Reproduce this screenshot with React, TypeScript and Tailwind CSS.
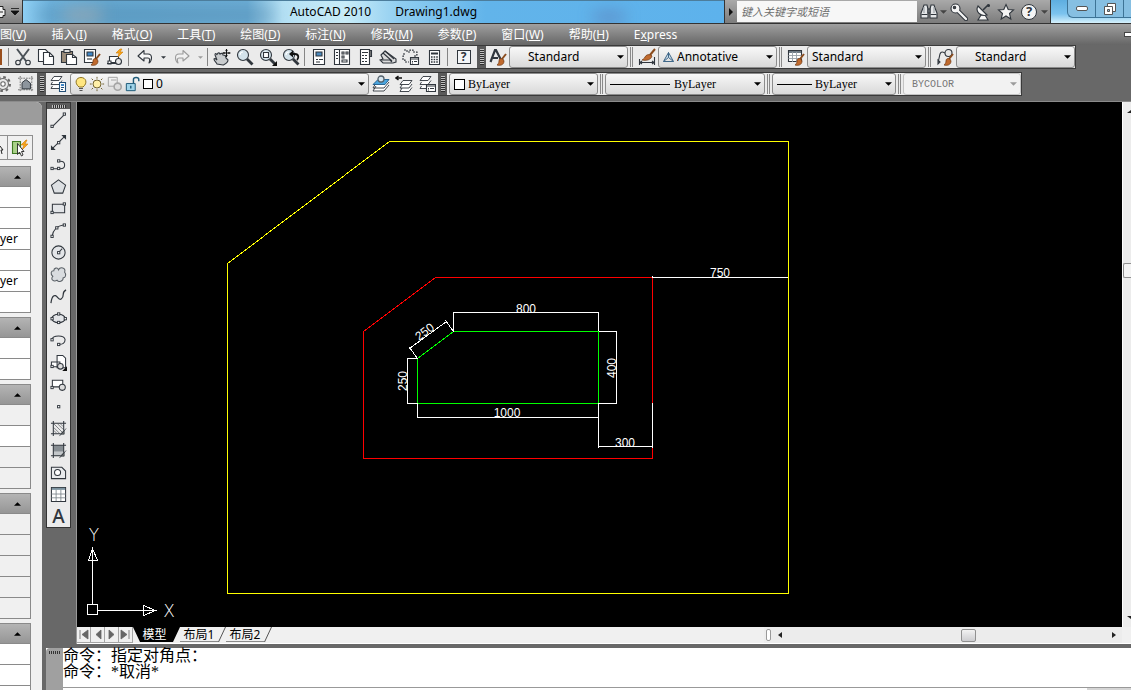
import type { ReactNode } from "react";

const UI = "font-['Noto_Sans','Noto_Sans_CJK_SC',sans-serif]";

type IconProps = { children: ReactNode; className?: string };

function Icon({ children, className = "size-[18px]" }: IconProps) {
  return (
    <svg
      viewBox="0 0 18 18"
      fill="none"
      stroke="#30363d"
      strokeWidth="1.1"
      className={`${className} shrink-0`}
      aria-hidden="true"
    >
      {children}
    </svg>
  );
}

const brush = (
  <>
    <path d="M17 6 13 11" stroke="#8a4b1d" strokeWidth="2" />
    <path d="M14 11c-3-1-4 0-4 2s-1 3-2 4c3 1 7 0 7-4z" fill="#c06a2e" stroke="#6b3510" strokeWidth="0.700" />
  </>
);

const lens = (
  <>
    <circle cx="7" cy="7" r="5.500" fill="#d3e2ea" />
    <path d="M4 7c0-2 1-3 3-3" stroke="#fff" />
    <path d="m11 11 5.500 5.500" strokeWidth="2.800" />
  </>
);

const sheets = (
  <g strokeWidth="0.900">
    <path d="M5 1.500h8l-3 4H2z" fill="#fff" />
    <path d="M3.500 7 2 9.500h8l3-4" fill="#fff" />
    <path d="M3.500 11 2 13.500h8l3-4" fill="#fff" />
  </g>
);

const icons = {
  cut: (
    <>
      <path d="m3 1 9 12M15 1 6 13" stroke="#4b5258" strokeWidth="2" />
      <circle cx="4" cy="14.500" r="2.300" />
      <circle cx="14" cy="14.500" r="2.300" />
    </>
  ),
  copy: (
    <>
      <path d="M1.500 1.500h7l3 3v9h-10z" fill="#fff" />
      <path d="M6.500 4.500h6l4 4v8h-10z" fill="#fff" />
      <path d="M12.500 4.500v4h4" />
    </>
  ),
  paste: (
    <>
      <path d="M1.500 3.500h11v11h-11z" fill="#9b8c7a" />
      <path d="M4 1.500h6v3H4z" fill="#ddd" />
      <path d="M6.500 6.500h6l4 3v7h-10z" fill="#fff" />
      <path d="M12.500 6.500v3h4" />
    </>
  ),
  match: (
    <>
      <path d="M1.500 1.500h11v13h-11z" fill="#fff" />
      <path d="M4 4h6v4H4z" fill="#3f86c6" />
      <path d="M4 11h5" />
      {brush}
    </>
  ),
  block: (
    <>
      <path d="M3.500 8.500h9v6h-9z" fill="#fff" />
      <path d="M1 15.500h10M2 13h3v3H2z" fill="#fff" />
      <circle cx="12.500" cy="13.500" r="3" fill="#e6e6e6" />
      <path d="m14 1-4 4h3l-1 4 5-5h-3l2-3z" fill="#f7a51c" stroke="#d17a00" strokeWidth="0.600" />
    </>
  ),
  undo: <path d="M8 2.500 2 8l6 5v-3h4c2 0 2 2 1 5 3-2 4-9-1-9H8z" fill="#f7f7f7" strokeLinejoin="round" />,
  redo: (
    <path
      d="m10 2.500 6 5.500-6 5v-3H6c-2 0-2 2-1 5C2 13 1 6 6 6h4z"
      fill="#f1f1f1"
      stroke="#9b9b9b"
      strokeLinejoin="round"
    />
  ),
  pan: (
    <>
      <path
        d="M4 16c-1-2-3-3-3-5 1-1 2 0 3 1L2 7c0-2 1-2 2 0 0-2 2-3 3-1 1-1 3-1 3 1 2 0 3 1 3 3l2 2c0 3-3 4-5 5z"
        fill="#c9ccce"
      />
      <path d="M13.500 1v8M9.500 5h8M12.500 2.500h2M12.500 7.500h2M11 4v2M16 4v2" stroke="#111" />
    </>
  ),
  zoom: lens,
  zoomWindow: (
    <>
      {lens}
      <path d="M4.500 4.500h5v5h-5z" fill="#fff" />
      <path d="M18 13v5h-5z" fill="#111" stroke="none" />
    </>
  ),
  zoomPrev: (
    <>
      {lens}
      <path d="M10 6h3c4 0 4 4 2 6" strokeWidth="1.800" stroke="#111" />
      <path d="M11 2.500v7L7 6z" fill="#111" stroke="none" />
    </>
  ),
  properties: (
    <>
      <path d="M3.500 1.500h11v15h-11z" fill="#fff" />
      <path d="M6 4h6v4H6z" fill="#4b89bd" />
      <path d="M6 11.500h2M9 11.500h4M6 14h4" />
    </>
  ),
  designCenter: (
    <>
      <path d="M1.500 1.500h15v15h-15zM6.500 1.500v15" fill="#fff" />
      <path d="M3 4.500h2M3 7.500h2M3 10.500h2M9 4h2v2H9zM13 4h2v2h-2zM9 8h2v2H9zM9 12h5v2H9z" />
    </>
  ),
  toolPalettes: (
    <>
      <path d="M4.500 1.500h9v15h-9z" fill="#fff" />
      <path d="M13.500 2.500h2v6h-2z" fill="#777" />
      <path d="M6 4.500h6M6 7.500h2M9 7.500h2M6 10.500h2M9 10.500h2M6 13.500h2M9 13.500h2" />
    </>
  ),
  sheetSet: (
    <>
      <path d="m2 7 4-4 11 8v3l-3 1H4l-3-3 3-1z" fill="#dcdcdc" />
      <path d="m4 5 9 8M6 3l9 8M2 12h9l2 2" />
    </>
  ),
  markup: (
    <>
      <path d="M2 2h3v2h3V2h3v2h4v3h-2v2M2 5v3H1v4h2v2h4" strokeDasharray="2 1" />
      <path d="M8.500 9.500h8v7h-8z" fill="#fff" />
      <path d="M8.500 11h8M10 13.500h1M12 13.500h3M10 15h1" />
    </>
  ),
  calc: (
    <>
      <path d="M4.500 2.500h10v14h-10z" fill="#fff" />
      <path d="M6 5.500h7" strokeWidth="2" />
      <path d="M6 9h7M6 11.500h7M6 14h7" strokeDasharray="1.600 1" strokeWidth="1.500" />
    </>
  ),
  textStyle: (
    <>
      <path d="M1.500 14 6 2h1l4.500 9M4 10h5" strokeWidth="2.200" />
      {brush}
    </>
  ),
  dimStyle: (
    <>
      <path d="M1.500 11v6M16.500 9v8M2 14.500h14M4 13l-2 1.500L4 16M14 13l2 1.500-2 1.500" />
      <path d="M17 1 12 7" stroke="#8a4b1d" strokeWidth="2" />
      <path d="M13 7c-3-1-5 0-6 2s-2 2-3 3c4 1 9 0 10-4z" fill="#c06a2e" stroke="#6b3510" strokeWidth="0.700" />
    </>
  ),
  tableStyle: (
    <>
      <path d="M1.500 2.500h13v11h-13z" fill="#fff" />
      <path d="M2 4h12" strokeWidth="2" stroke="#6e7a84" />
      <path d="M1.500 7.500h13M1.500 10.500h13M5.500 4v10M9.500 4v10" stroke="#9aa3aa" strokeWidth="0.900" />
      {brush}
    </>
  ),
  leaderStyle: (
    <>
      <path d="M2 15 4 6c1-3 3-2 5-1M2 16v-4l2 2z" />
      <circle cx="12.500" cy="5" r="3.500" fill="#e7e7e7" />
      {brush}
    </>
  ),
  layerProps: (
    <>
      {sheets}
      <path d="M10.500 7.500h6v9h-6z" fill="#fff" stroke="#234f77" />
      <path d="M12 10h3" stroke="#3f86c6" strokeWidth="2" />
      <path d="M12 12.500h3M12 14.500h2" stroke="#234f77" />
    </>
  ),
  layerCurrent: (
    <g strokeWidth="0.900">
      <path d="m4 11-3 5h11l5-6M4 8l-3 5h11l5-6" fill="#fff" />
      <path d="M6 4.500h11l-4 5H1z" fill="#4aa5de" stroke="#1e5a88" />
      <circle cx="9" cy="4" r="3" fill="#d7e6ef" stroke="#55626c" strokeWidth="1.300" />
    </g>
  ),
  layerPrev: (
    <>
      <path d="M8 5.500h9l-3 4H5zM7 10l-2 3h9l3-4M7 13l-2 3.500h9l3-4" fill="#fff" strokeWidth="0.900" />
      <path d="M1 3h6M3.500 1 1 3l2.500 2" stroke="#111" strokeWidth="1.500" />
    </>
  ),
  layerStates: (
    <>
      {sheets}
      <path d="M8.500 9.500h9v7h-9z" fill="#fff" />
      <path d="M8.500 11h9M10 13.500h1M12 13.500h4M10 15h1" />
    </>
  ),
  gear: (
    <>
      <circle cx="9" cy="9" r="7" stroke="#6a6a6a" strokeWidth="2" strokeDasharray="2.700 2.800" />
      <circle cx="9" cy="9" r="5.500" fill="#e8e8e8" stroke="#6a6a6a" />
      <circle cx="9" cy="9" r="2.200" fill="#fff" stroke="#6a6a6a" />
    </>
  ),
  workspace: (
    <>
      <path d="M2.500 0v18M15.500 0v18M0 2.500h18M0 15.500h18" strokeDasharray="2 1" stroke="#777" />
      <path d="M4.500 14.500v-7L9 4l5 4v6.500z" fill="#8d959d" />
    </>
  ),
};

const node = (x: number, y: number) => (
  <rect key={`${x}-${y}`} x={x - 1} y={y - 1} width="2.400" height="2.400" fill="#fff" strokeWidth="1" />
);

const drawTools: { name: string; art: ReactNode }[] = [
  { name: "Line", art: <><path d="M2 16 16 2" />{node(2, 15)}{node(15, 2)}</> },
  {
    name: "Construction line",
    art: <><path d="M3 15 15 3" /><path d="M1 17v-5l5 5zM17 1v5l-5-5z" fill="#30363d" stroke="none" />{node(9, 9)}</>,
  },
  {
    name: "Polyline",
    art: <><path d="M2 13.500h9c6 0 6-8 0-8H9" />{node(2, 13)}{node(9, 13)}{node(9, 5)}</>,
  },
  { name: "Polygon", art: <path d="m9 2 7.500 5.500L13.500 16h-9l-3-8.500z" fill="#dde0e3" /> },
  { name: "Rectangle", art: <><path d="M2.500 4.500h13v9h-13z" fill="#e3e5e8" />{node(2, 13)}{node(15, 4)}</> },
  { name: "Arc", art: <><path d="M2 16C3 8 8 4 15 3" />{node(2, 15)}{node(7, 6)}{node(15, 3)}</> },
  {
    name: "Circle",
    art: <><circle cx="9" cy="9" r="7" fill="#e3e5e8" /><path d="m9 9 4-4" />{node(9, 9)}</>,
  },
  {
    name: "Revision cloud",
    art: (
      <path
        d="M9 4c2-4 8-2 6.500 2.500 2 2.500 1 6-1.500 6 0 4-5 5-6.500 2.500C4 17.500 0 14 3 11 0 8 1 5 4 5c0-3 4-4 5-1z"
        fill="#d9dcdf"
        stroke="#5a6066"
      />
    ),
  },
  { name: "Spline", art: <path d="M1 16c1-8 4-10 7-6s6 1 6-3c0-3 1-4 3-5" strokeWidth="1.300" /> },
  {
    name: "Ellipse",
    art: <><ellipse cx="9" cy="9" rx="7" ry="4.500" fill="#e3e5e8" />{node(2, 9)}{node(9, 4)}{node(16, 9)}{node(9, 13)}</>,
  },
  {
    name: "Ellipse arc",
    art: <><path d="M2 8C3 3 15 3 16 8c0 4-3 5-6 5" />{node(2, 8)}{node(9, 13)}</>,
  },
  {
    name: "Insert block",
    art: (
      <>
        <path d="M7.500 1.500h6l3 3v10h-9zM1.500 8.500h9v5h-9z" fill="#fff" />
        <circle cx="11" cy="13" r="3" fill="#ddd" />
        {node(2, 13)}
        <path d="M18 13v5h-5z" fill="#111" stroke="none" />
      </>
    ),
  },
  {
    name: "Make block",
    art: <><path d="M2.500 4.500h11v7h-11z" fill="#fff" /><circle cx="13" cy="12" r="3.200" fill="#ddd" />{node(2, 12)}</>,
  },
  { name: "Point", art: node(9, 9) },
  {
    name: "Hatch",
    art: (
      <>
        <path d="M3.500 1v16M14.500 1v10M1 3.500h16M1 14.500h10" />
        <path d="m4 4 10 10M4 8l6 6M8 4l6 6M4 11l3 3M11 4l3 3" strokeWidth="0.600" />
        <path d="m17 9-7 8M15 11v4h-4z" fill="#777" strokeWidth="0.800" />
      </>
    ),
  },
  {
    name: "Gradient",
    art: (
      <>
        <path d="M3.500 3.500h11v11h-11z" fill="#868d92" stroke="none" />
        <path d="M4 10h10v4H4z" fill="#c3c7ca" stroke="none" />
        <path d="M3.500 1v16M14.500 1v10M1 3.500h16M1 14.500h10" />
        <path d="m17 9-7 8M15 11v4h-4z" fill="#777" strokeWidth="0.800" />
      </>
    ),
  },
  {
    name: "Region",
    art: <><path d="M1.500 3.500h11l4 4v8h-15z" fill="#e9ebed" /><circle cx="8" cy="9" r="3.200" fill="#fff" /></>,
  },
  {
    name: "Table",
    art: (
      <>
        <path d="M1.500 1.500h15v15h-15z" fill="#fff" />
        <path d="M2 3h14" stroke="#7b929f" strokeWidth="2.200" />
        <path d="M1.500 8.500h15M1.500 12.500h15M6.500 4v12M11.500 4v12" stroke="#7d858b" strokeWidth="0.900" />
      </>
    ),
  },
];

function ToolButton({ name, children, wide = "w-[23px]" }: { name: string; children: ReactNode; wide?: string }) {
  return (
    <button type="button" aria-label={name} className={`flex h-full shrink-0 items-center justify-center ${wide}`}>
      {children}
    </button>
  );
}

function Caret({ className = "text-black" }: { className?: string }) {
  return (
    <svg viewBox="0 0 8 4" className={`h-1 w-[7px] shrink-0 ${className}`} aria-hidden="true">
      <path d="M0 0h8L4 4z" fill="currentColor" />
    </svg>
  );
}

const Rule = () => <span className="mx-0.5 h-[18px] w-px shrink-0 bg-[#858585]" />;

const DoubleRule = () => <span className="mx-0.5 h-5 w-[3px] shrink-0 border-x border-[#8a8a8a]" />;

function Grip() {
  return (
    <span className="flex w-[9px] shrink-0 items-center justify-center self-stretch bg-[#5a5a5a]">
      <span className="h-4 w-1 bg-[repeating-linear-gradient(to_bottom,#c0c0c0_0_1px,#2e2e2e_1px_2px)]" />
    </span>
  );
}

function Strip({ children }: { children: ReactNode }) {
  return (
    <div className="flex h-6 shrink-0 items-center border-y border-r border-[#3a3a3a] bg-[#ebebeb]">{children}</div>
  );
}

type ComboProps = {
  label: string;
  value: string;
  width: string;
  text: string;
  children?: ReactNode;
  disabled?: boolean;
};

function Combo({ label, value, width, text, children, disabled }: ComboProps) {
  return (
    <span className={`relative h-[22px] shrink-0 ${width}`}>
      <select
        aria-label={label}
        disabled={disabled}
        defaultValue={value}
        className={`block size-full appearance-none rounded-[3px] border ${
          disabled
            ? "border-[#c4c4c4] bg-[#f2f2f2] text-[#777]"
            : "border-[#8c8c8c] bg-linear-to-b from-[#f8f8f8] to-[#d9d9d9] text-black"
        } ${text}`}
      >
        <option>{value}</option>
      </select>
      <span className="pointer-events-none absolute inset-y-0 left-[5px] flex items-center">{children}</span>
      <span className="pointer-events-none absolute inset-y-0 right-1 flex items-center">
        <Caret className={disabled ? "text-[#9b9b9b]" : "text-black"} />
      </span>
    </span>
  );
}

function TitleBar() {
  return (
    <header className="flex h-6 shrink-0 border-b border-[#333] bg-[#5eb2e8]">
      <div className="flex w-[23px] shrink-0 items-center gap-[5px] border-r border-[#333] bg-linear-to-b from-[#b5b5b5] to-[#7d7d7d]">
        <svg viewBox="0 0 6 14" className="h-3.5 w-1.5" aria-hidden="true">
          <path d="M0 1.500h3v3h2v6H3v2H0M0 7h3" fill="#eee" stroke="#222" />
        </svg>
        <svg viewBox="0 0 8 8" className="size-2" aria-hidden="true">
          <path d="M0 .5h8M0 3h8L4 7z" fill="#111" stroke="#111" strokeWidth="0.800" />
        </svg>
      </div>
      <div className="relative flex flex-1 items-center justify-center gap-6 overflow-hidden border-t border-[#4c7d9c] bg-[linear-gradient(90deg,#8fd0f5_0%,#6fb4de_4%,#66a9d2_12%,#6cadd6_32%,#b4e0f4_37%,#c8ecf8_46%,#8fcdf0_54%,#62b4ea_66%,#5db2ec_100%)] pl-5 text-xs text-black">
        <span className="absolute top-2 left-3 h-3 w-60 rounded-full bg-[#3f7395]/40 blur-sm" />
        <span className="absolute top-2 left-10 h-3 w-10 rounded-full bg-[#c9b3a6]/50 blur-sm" />
        <span className="absolute top-3 left-[570px] h-2 w-8 rounded-full bg-[#5a5f9a]/60 blur-sm" />
        <span className="relative">AutoCAD 2010</span>
        <span className="relative">Drawing1.dwg</span>
      </div>
      <div className="flex w-[327px] shrink-0 items-center border-x border-[#333] bg-linear-to-b from-[#a9a9a9] to-[#7c7c7c]">
        <button type="button" aria-label="Collapse search" className="flex w-3 justify-center">
          <svg viewBox="0 0 4 8" className="h-2 w-1" aria-hidden="true">
            <path d="M0 0v8l4-4z" fill="#111" />
          </svg>
        </button>
        <input
          aria-label="Search"
          placeholder="键入关键字或短语"
          className="h-[21px] w-[180px] bg-[#f7f7f7] px-1 text-[11px] italic placeholder:text-[#6f6f6f]"
        />
        <ToolButton name="Find">
          <Icon>
            <path d="M3 5l1-3h3l1 4v9H1v-5zM15 5l-1-3h-3l-1 4v9h7v-5z" fill="#e4e6e8" />
            <path d="M8 6h2v4H8z" fill="#8c9296" />
            <path d="M1.500 11.500h6M10.500 11.500h6" />
            <path d="M4 4v6M14 4v6" stroke="#9aa0a5" />
          </Icon>
        </ToolButton>
        <Caret className="text-[#444]" />
        <ToolButton name="Subscription" wide="w-6">
          <Icon>
            <path d="m8 8 8 8" strokeWidth="4.500" strokeLinecap="round" />
            <circle cx="5.500" cy="5.500" r="4.500" fill="#f4f4f4" />
            <path d="m8 8 8 8" stroke="#f4f4f4" strokeWidth="2.400" strokeLinecap="round" />
            <circle cx="4.500" cy="4.500" r="1.200" fill="#444" />
          </Icon>
        </ToolButton>
        <ToolButton name="Communication center">
          <Icon>
            <path d="m7 12-3 5h10l-3-5z" fill="#f4f4f4" />
            <path d="M4 3c-3 5 2 11 9 9z" fill="#f4f4f4" />
            <path d="m9 7 5-5" strokeWidth="1.600" />
            <circle cx="14.500" cy="2.500" r="1" fill="#30363d" />
          </Icon>
        </ToolButton>
        <ToolButton name="Favorites">
          <Icon>
            <path d="m9 1.500 2.200 5 5.300.5-4 3.500 1.300 5.500L9 13l-4.800 3 1.300-5.500-4-3.500 5.300-.5z" fill="#f4f4f4" />
          </Icon>
        </ToolButton>
        <button
          type="button"
          aria-label="Help"
          className="mx-1 flex size-4 shrink-0 items-center justify-center rounded-full border border-[#30363d] bg-[#f4f4f4] text-[13px] leading-none font-bold text-[#30363d]"
        >
          ?
        </button>
        <Caret className="text-[#444]" />
      </div>
      <div className="flex w-20 shrink-0 justify-end bg-[linear-gradient(to_bottom,#5eaee0_0%,#7cc3ee_60%,#d5f0fb_100%)]">
        <div className="flex h-[18px] w-16 rounded-bl-md border-b border-l border-[#3d7396] bg-[#86bfe2]">
          <button type="button" aria-label="Minimize" className="flex w-7 items-center justify-center border-r border-[#3d7396]">
            <span className="h-[5px] w-3 rounded-xs border border-[#555] bg-white" />
          </button>
          <button type="button" aria-label="Restore" className="flex w-7 items-center justify-center border-r border-[#3d7396]">
            <svg viewBox="0 0 12 12" className="h-3 w-3 shrink-0" aria-hidden="true">
              <path d="M3.500.5h8v8h-8z" fill="#fff" stroke="#555" />
              <path d="M.5 3.500h8v8h-8z" fill="#fff" stroke="#555" />
              <path d="M3.500 6.500h2v2h-2z" fill="#8fc3e2" stroke="#555" />
            </svg>
          </button>
        </div>
      </div>
    </header>
  );
}

const menus = [
  ["图", "V"],
  ["插入", "I"],
  ["格式", "O"],
  ["工具", "T"],
  ["绘图", "D"],
  ["标注", "N"],
  ["修改", "M"],
  ["参数", "P"],
  ["窗口", "W"],
  ["帮助", "H"],
];

function MenuBar() {
  return (
    <nav className="flex h-[21px] shrink-0 items-center gap-[25px] overflow-hidden bg-linear-to-b from-[#a0a0a0] to-[#666] text-xs text-white">
      {menus.map(([label, key]) => (
        <button key={key} type="button" className="shrink-0 whitespace-nowrap">
          {label}(<u>{key}</u>)
        </button>
      ))}
      <button type="button">
        E<u>x</u>press
      </button>
      <button type="button" aria-label="Minimize drawing" className="ml-auto h-[5px] w-[7px] border border-r-0 border-[#444] bg-white" />
    </nav>
  );
}

function Toolbars() {
  return (
    <div className="flex shrink-0 flex-col items-start gap-[3px] border-b border-[#8b8b8b] bg-[#686868] pb-[5px]">
      <Strip>
        <span className="h-4 w-1.5 shrink-0 border-r-4 border-[#ebebeb] bg-[#9a4f1d]" />
        <Rule />
        <ToolButton name="Cut"><Icon>{icons.cut}</Icon></ToolButton>
        <ToolButton name="Copy"><Icon>{icons.copy}</Icon></ToolButton>
        <ToolButton name="Paste"><Icon>{icons.paste}</Icon></ToolButton>
        <ToolButton name="Match properties"><Icon>{icons.match}</Icon></ToolButton>
        <ToolButton name="Block editor"><Icon>{icons.block}</Icon></ToolButton>
        <Rule />
        <ToolButton name="Undo" wide="w-7"><Icon>{icons.undo}</Icon></ToolButton>
        <ToolButton name="Undo list" wide="w-[9px]">
          <svg viewBox="0 0 8 4" className="h-[3px] w-[5px] text-[#30363d]" aria-hidden="true"><path d="M0 0h8L4 4z" fill="currentColor" /></svg>
        </ToolButton>
        <ToolButton name="Redo" wide="w-7"><Icon>{icons.redo}</Icon></ToolButton>
        <ToolButton name="Redo list" wide="w-[9px]">
          <svg viewBox="0 0 8 4" className="h-[3px] w-[5px] text-[#9b9b9b]" aria-hidden="true"><path d="M0 0h8L4 4z" fill="currentColor" /></svg>
        </ToolButton>
        <Rule />
        <ToolButton name="Pan"><Icon>{icons.pan}</Icon></ToolButton>
        <ToolButton name="Zoom"><Icon>{icons.zoom}</Icon></ToolButton>
        <ToolButton name="Zoom window"><Icon>{icons.zoomWindow}</Icon></ToolButton>
        <ToolButton name="Zoom previous"><Icon>{icons.zoomPrev}</Icon></ToolButton>
        <Rule />
        <ToolButton name="Properties"><Icon>{icons.properties}</Icon></ToolButton>
        <ToolButton name="DesignCenter"><Icon>{icons.designCenter}</Icon></ToolButton>
        <ToolButton name="Tool palettes"><Icon>{icons.toolPalettes}</Icon></ToolButton>
        <ToolButton name="Sheet set manager"><Icon>{icons.sheetSet}</Icon></ToolButton>
        <ToolButton name="Markup set manager"><Icon>{icons.markup}</Icon></ToolButton>
        <ToolButton name="QuickCalc"><Icon>{icons.calc}</Icon></ToolButton>
        <Rule />
        <ToolButton name="Help" wide="w-[27px]">
          <span className="flex size-3.5 items-center justify-center border border-[#30363d] bg-[#f3f5f7] text-xs leading-none font-bold text-[#30363d]">
            ?
          </span>
        </ToolButton>
        <Grip />
        <ToolButton name="Text style"><Icon>{icons.textStyle}</Icon></ToolButton>
        <Combo label="Text style" value="Standard" width="w-[119px]" text="pl-[18px] text-xs" />
        <DoubleRule />
        <ToolButton name="Dimension style"><Icon>{icons.dimStyle}</Icon></ToolButton>
        <Combo label="Dimension style" value="Annotative" width="w-[119px]" text="pl-[18px] text-xs">
          <svg viewBox="0 0 11 11" className="size-[11px]" fill="none" stroke="#3f6788" aria-hidden="true">
            <path d="M5.500.5v5L.5 9.500zM5.500.5l5 9-5-4M.5 9.500h10" fill="#cfe0ec" />
          </svg>
        </Combo>
        <DoubleRule />
        <ToolButton name="Table style"><Icon>{icons.tableStyle}</Icon></ToolButton>
        <Combo label="Table style" value="Standard" width="w-[119px]" text="pl-1 text-xs" />
        <DoubleRule />
        <ToolButton name="Multileader style"><Icon>{icons.leaderStyle}</Icon></ToolButton>
        <Combo label="Multileader style" value="Standard" width="w-[119px]" text="pl-[18px] text-xs" />
      </Strip>
      <Strip>
        <ToolButton name="Workspace settings" wide="w-3.5">
          <Icon className="-ml-2 size-[18px]">{icons.gear}</Icon>
        </ToolButton>
        <ToolButton name="My workspace"><Icon className="size-4">{icons.workspace}</Icon></ToolButton>
        <Grip />
        <ToolButton name="Layer properties" wide="w-6"><Icon>{icons.layerProps}</Icon></ToolButton>
        <Combo label="Layer" value="0" width="w-[299px]" text="pl-[85px] text-xs">
          <span className="flex items-center gap-0.5">
            <svg viewBox="0 0 12 16" className="h-4 w-3" aria-hidden="true">
              <path d="M4 11C-1 7 1 1.500 6 1.500S13 7 8 11z" fill="#ffe680" stroke="#8f7420" />
              <path d="M4 12.500h4M4.500 14.500h3" stroke="#555" />
            </svg>
            <Icon className="size-4">
              <circle cx="9" cy="9" r="4.500" fill="#fff0a8" stroke="#6f6030" />
              <path d="M9 1v2M9 15v2M1 9h2M15 9h2M3 3l1.500 1.500M13.500 13.500 15 15M15 3l-1.500 1.500M3 15l1.500-1.500" stroke="#6f6030" />
            </Icon>
            <Icon className="size-4">
              <path d="M1.500 1.500h10v10h-10zM4.500 4.500h6" stroke="#a5a5a5" />
              <circle cx="12" cy="12" r="4" fill="#ddd" stroke="#a5a5a5" strokeWidth="1.800" />
            </Icon>
            <Icon className="size-4">
              <path d="M1.500 8.500h10v8h-10z" fill="#9fd4ea" stroke="#1e5a78" />
              <path d="M9.500 8V4c0-3 6-3 6 0v2M6.500 11v3" stroke="#1e5a78" strokeWidth="1.600" />
            </Icon>
            <span className="size-2.5 border border-black bg-white" />
          </span>
        </Combo>
        <ToolButton name="Make object's layer current"><Icon>{icons.layerCurrent}</Icon></ToolButton>
        <ToolButton name="Layer previous"><Icon>{icons.layerPrev}</Icon></ToolButton>
        <ToolButton name="Layer states manager"><Icon>{icons.layerStates}</Icon></ToolButton>
        <Grip />
        <Combo
          label="Color"
          value="ByLayer"
          width="ml-0.5 w-[149px]"
          text="pl-[18px] font-['Liberation_Serif',serif] text-xs"
        >
          <span className="size-[11px] border border-black bg-white" />
        </Combo>
        <DoubleRule />
        <Combo
          label="Linetype"
          value="ByLayer"
          width="w-[160px]"
          text="pl-[68px] font-['Liberation_Serif',serif] text-xs"
        >
          <span className="h-px w-[60px] bg-black" />
        </Combo>
        <DoubleRule />
        <Combo
          label="Lineweight"
          value="ByLayer"
          width="w-[124px]"
          text="pl-[42px] font-['Liberation_Serif',serif] text-xs"
        >
          <span className="h-px w-[35px] bg-black" />
        </Combo>
        <DoubleRule />
        <Combo
          label="Plot style"
          value="BYCOLOR"
          width="w-[118px]"
          text="pl-2 font-['Liberation_Mono',monospace] text-[10px]"
          disabled
        />
      </Strip>
    </div>
  );
}

// w: editable row, g: read-only row, anything else is the visible tail of the value
const paletteSections = [
  ["w", "w", "yer", "w", "yer", "w"],
  ["w", "w"],
  ["g", "w", "g", "g"],
  ["g", "g", "g", "g", "g"],
  ["w", "w", "w"],
];

function PropertiesPalette() {
  return (
    <aside className="flex w-[42px] shrink-0 flex-col overflow-hidden rounded-tr-md bg-[#f0f0f0] text-xs">
      <div className="h-[23px] shrink-0 bg-[#9c9c9c]" />
      <div className="mt-[10px] mb-1.5 flex h-[25px] w-[33px] shrink-0 border border-l-0 border-[#8f8f8f]">
        <button type="button" aria-label="Select objects" className="w-2 border-r border-[#8f8f8f]">
          <svg viewBox="0 0 5 16" className="h-4 w-[5px]" aria-hidden="true">
            <path d="M0 6l3 4H1l1 4" fill="none" stroke="#222" />
          </svg>
        </button>
        <button type="button" aria-label="Quick select" className="flex flex-1 items-center justify-center">
          <Icon>
            <path d="M1.500 2.500h8v12h-8z" fill="#a9d187" stroke="#3f7a22" />
            <path d="m15 1-5 5h3l-2 5 6-6h-3l2-4z" fill="#f7a51c" stroke="#d17a00" strokeWidth="0.600" />
            <path d="M6.500 4.500v11l2-2.500 2 4 1.500-1-1.500-3.500h2.500z" fill="#fff" stroke="#222" strokeWidth="0.900" />
          </Icon>
        </button>
      </div>
      <div className="flex w-[31px] flex-col gap-1">
        {paletteSections.map((rows, i) => (
          <section key={i} className="border-r border-[#8a8a8a]">
            <button
              type="button"
              aria-label="Collapse section"
              aria-expanded="true"
              className="flex h-[21px] w-full items-center justify-end border-y border-[#8a8a8a] bg-linear-to-b from-[#b4b4b4] to-[#969696] pr-[9px]"
            >
              <Caret className="rotate-180 text-black" />
            </button>
            {rows.map((row, j) => (
              <div
                key={j}
                className={`flex h-[21px] items-center border-b border-[#8a8a8a] ${row === "g" ? "bg-[#f0f0f0]" : "bg-white"}`}
              >
                {row.length > 1 && row}
              </div>
            ))}
          </section>
        ))}
      </div>
    </aside>
  );
}

function DrawToolbar() {
  return (
    <div className="flex w-[25px] shrink-0 flex-col self-start border border-[#333] bg-[#ebebeb]">
      <span className="flex h-1.5 items-center justify-center bg-[#5a5a5a]">
        <span className="h-[3px] w-3.5 bg-[repeating-linear-gradient(to_right,#c0c0c0_0_1px,#2e2e2e_1px_2px)]" />
      </span>
      {drawTools.map((tool) => (
        <button key={tool.name} type="button" aria-label={tool.name} className="flex h-[22px] items-center justify-center">
          <Icon className="size-[17px]">{tool.art}</Icon>
        </button>
      ))}
      <button type="button" className="h-[22px] text-[19px] leading-[22px] font-medium text-[#30363d]">
        A
      </button>
    </div>
  );
}

const dimensions = [
  { text: "750", x: 720, y: 277, turn: 0 },
  { text: "800", x: 526, y: 313, turn: 0 },
  { text: "1000", x: 507, y: 417, turn: 0 },
  { text: "300", x: 625, y: 447, turn: 0 },
  { text: "400", x: 616, y: 368, turn: -90 },
  { text: "250", x: 407, y: 381, turn: -90 },
  { text: "250", x: 427, y: 335, turn: -37 },
];

function Drawing() {
  return (
    <svg className="min-w-0 flex-1 bg-black" fill="none" strokeWidth="1" role="img" aria-label="Drawing1.dwg">
      <g transform="translate(-77 -102)">
        <g shapeRendering="crispEdges">
          <path d="M227.500 263.500 389.500 141.500H788.500V593.500H227.500z" stroke="#ffff00" />
          <path d="M363.500 331.500 435.500 277.500H652.500V458.500H363.500z" stroke="#ff0000" />
          <path d="M417.500 358.500 453.500 331.500H598.500V403.500H417.500z" stroke="#00ff00" />
          <g stroke="#fff">
            <path d="M652.500 276V278M652 277.500H788" />
            <path d="M453.500 332V312.500H598.500V331" />
            <path d="M598.500 331.500H616.500V403.500H598.500" />
            <path d="M417.500 403V417.500H598.500" />
            <path d="M598.500 403V448M598 446.500H652M652.500 403V448" />
            <path d="M417.500 358.500H407.500V403.500H417.500" />
            <path d="M417.500 358.500 409.500 347.500M409.500 348.500 446.500 321.500M445.500 320.500 453.500 331.500" />
            <path d="M87.500 604.500h10v10h-10zM92.500 604V549M98 610.500H155" />
            <path d="M88.500 560.500 92.500 548.500 97.500 560.500z M143.500 605.500 155.500 610.500 143.500 615.500z" />
          </g>
        </g>
        <g fill="#fff" textAnchor="middle" className="font-['Liberation_Sans',sans-serif] text-xs">
          {dimensions.map((d) => (
            <text key={`${d.x}-${d.y}`} x={d.x} y={d.y} transform={`rotate(${d.turn} ${d.x} ${d.y})`}>
              {d.text}
            </text>
          ))}
        </g>
        <g fill="#fff" textAnchor="middle" className="font-['DejaVu_Sans',sans-serif] text-[17px] font-extralight">
          <text x="94" y="541">Y</text>
          <text x="169" y="617">X</text>
        </g>
      </g>
    </svg>
  );
}

const tabNav = [
  { name: "First layout", d: "M3 2v9M11 2v9L5 6.500z" },
  { name: "Previous layout", d: "M10 2v9L5 6.500z" },
  { name: "Next layout", d: "M4 2v9l5-4.500z" },
  { name: "Last layout", d: "M10 2v9M2 2v9l6-4.500z" },
];

function LayoutTabs() {
  return (
    <div className="flex h-[17px] shrink-0 border-b border-white bg-[#f0f0f0] text-xs leading-4">
      {tabNav.map((nav) => (
        <button key={nav.name} type="button" aria-label={nav.name} className="h-4 w-3.5 border-r border-b border-[#a5a5a5]">
          <svg viewBox="0 0 13 13" className="size-[13px]" fill="#666" stroke="#666" strokeWidth="0.800" aria-hidden="true">
            <path d={nav.d} />
          </svg>
        </button>
      ))}
      <button type="button" className="h-[15px] w-[47px] bg-black pr-1 text-white [clip-path:polygon(0_0,100%_0,40px_100%,7px_100%)]">
        模型
      </button>
      {["布局1", "布局2"].map((name) => (
        <button key={name} type="button" className="relative h-[15px] w-[46px] border-b border-[#8a8a8a] pr-2 text-black">
          {name}
          <svg viewBox="0 0 8 15" className="absolute top-0 right-0 h-[15px] w-2" aria-hidden="true">
            <path d="M8 0v15H0z" fill="#f0f0f0" />
            <path d="M7.500 0 .5 15" stroke="#555" />
          </svg>
        </button>
      ))}
      <div className="ml-auto flex w-[34%] items-center bg-[#ececec]">
        <span className="ml-0.5 h-3 w-[5px] rounded-xs border border-[#999] bg-white" />
        <button type="button" aria-label="Scroll left" className="flex w-[18px] justify-center">
          <svg viewBox="0 0 4 6" className="h-1.5 w-1" aria-hidden="true"><path d="M4 0v6L0 3z" fill="#222" /></svg>
        </button>
        <div className="flex flex-1 pl-[48%]">
          <span className="h-[13px] w-[15px] rounded-xs border border-[#909090] bg-linear-to-b from-[#f2f2f2] to-[#cdcdd0]" />
        </div>
        <button type="button" aria-label="Scroll right" className="flex w-[17px] justify-center">
          <svg viewBox="0 0 4 6" className="h-1.5 w-1" aria-hidden="true"><path d="M0 0v6l4-3z" fill="#222" /></svg>
        </button>
      </div>
      <span className="w-[9px] shrink-0" />
    </div>
  );
}

function VerticalScroll() {
  return (
    <div className="flex w-[9px] shrink-0 flex-col items-end overflow-hidden border-l border-white bg-[#ececec] py-2">
      <svg viewBox="0 0 4 3" className="h-[3px] w-1" aria-hidden="true"><path d="M0 3h4V0z" fill="#222" /></svg>
      <div className="w-full flex-1 pt-[150px]">
        <span className="block h-[15px] rounded-l-xs border border-r-0 border-[#909090] bg-[#f4f4f4]" />
      </div>
      <svg viewBox="0 0 4 3" className="h-[3px] w-1" aria-hidden="true"><path d="M0 0h4v3z" fill="#222" /></svg>
    </div>
  );
}

function CommandLine() {
  return (
    <div className="flex h-[42px] shrink-0 bg-white">
      <div className="flex w-[17px] shrink-0 justify-center rounded-tl-sm bg-[#a0a0a0] pt-[3px]">
        <span className="h-[3px] w-3 bg-[repeating-linear-gradient(to_right,#333_0_1px,#a0a0a0_1px_2px)]" />
      </div>
      <div className="flex-1 font-['Liberation_Serif','Noto_Sans_CJK_SC',serif] text-base leading-4 text-black">
        <p>命令：指定对角点：</p>
        <p>命令：*取消*</p>
        <div className="mt-[7px] flex h-[3px] justify-end border-t border-[#999] bg-white">
          <span className="h-0.5 w-11 bg-[#d5d5d5]" />
        </div>
      </div>
    </div>
  );
}

export default function App() {
  return (
    <div className={`flex h-screen flex-col overflow-hidden bg-[#686868] ${UI}`}>
      <TitleBar />
      <MenuBar />
      <Toolbars />
      <main className="flex min-h-0 flex-1 gap-1">
        <PropertiesPalette />
        <div className="flex min-w-0 flex-1 flex-col">
          <div className="flex min-h-0 flex-1 gap-[5px]">
            <DrawToolbar />
            <div className="flex min-w-0 flex-1 flex-col border-l border-[#999]">
              <div className="flex min-h-0 flex-1">
                <Drawing />
                <VerticalScroll />
              </div>
              <LayoutTabs />
            </div>
          </div>
          <div className="h-1 shrink-0 bg-[#686868]" />
          <CommandLine />
        </div>
      </main>
    </div>
  );
}
